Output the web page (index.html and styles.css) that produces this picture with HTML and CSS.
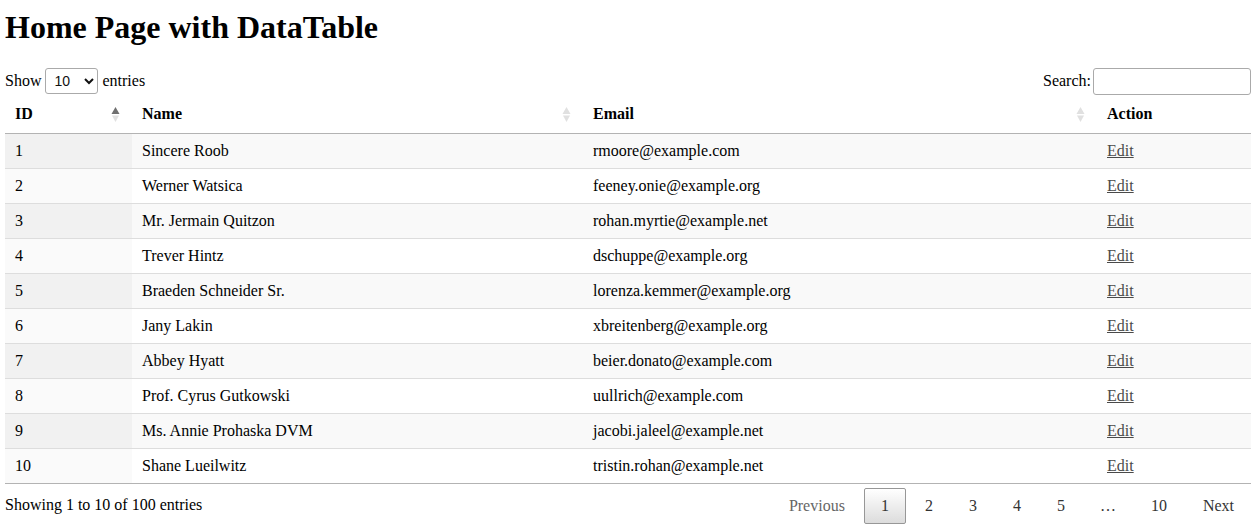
FILE: index.html
```html
<!DOCTYPE html>
<html>
<head>
<meta charset="utf-8">
<title>Home Page with DataTable</title>
<link rel="stylesheet" href="styles.css">
</head>
<body>
<h1 class="title">Home Page with DataTable</h1>
<div class="controls">
  <label class="length">Show
    <select class="length-select"><option>10</option><option>25</option><option>50</option><option>100</option></select>
    entries</label>
  <label class="filter">Search:<input class="search" type="search"></label>
</div>
<table class="dt">
  <colgroup><col class="c-id"><col class="c-name"><col class="c-email"><col class="c-action"></colgroup>
  <thead>
    <tr>
      <th><div class="th-in"><span>ID</span><svg class="sort" width="9" height="17" viewBox="0 0 9 17"><polygon class="on" points="0.5,8 8.5,8 4.5,1"/><polygon class="off" points="1,9.5 8,9.5 4.5,16"/></svg></div></th>
      <th><div class="th-in"><span>Name</span><svg class="sort" width="9" height="17" viewBox="0 0 9 17"><polygon class="off" points="0.5,8 8.5,8 4.5,1"/><polygon class="off" points="1,9.5 8,9.5 4.5,16"/></svg></div></th>
      <th><div class="th-in"><span>Email</span><svg class="sort" width="9" height="17" viewBox="0 0 9 17"><polygon class="off" points="0.5,8 8.5,8 4.5,1"/><polygon class="off" points="1,9.5 8,9.5 4.5,16"/></svg></div></th>
      <th><div class="th-in"><span>Action</span></div></th>
    </tr>
  </thead>
  <tbody>
    <tr class="odd"><td class="s1">1</td><td>Sincere Roob</td><td>rmoore@example.com</td><td><a href="#" class="edit">Edit</a></td></tr>
    <tr class="even"><td class="s1">2</td><td>Werner Watsica</td><td>feeney.onie@example.org</td><td><a href="#" class="edit">Edit</a></td></tr>
    <tr class="odd"><td class="s1">3</td><td>Mr. Jermain Quitzon</td><td>rohan.myrtie@example.net</td><td><a href="#" class="edit">Edit</a></td></tr>
    <tr class="even"><td class="s1">4</td><td>Trever Hintz</td><td>dschuppe@example.org</td><td><a href="#" class="edit">Edit</a></td></tr>
    <tr class="odd"><td class="s1">5</td><td>Braeden Schneider Sr.</td><td>lorenza.kemmer@example.org</td><td><a href="#" class="edit">Edit</a></td></tr>
    <tr class="even"><td class="s1">6</td><td>Jany Lakin</td><td>xbreitenberg@example.org</td><td><a href="#" class="edit">Edit</a></td></tr>
    <tr class="odd"><td class="s1">7</td><td>Abbey Hyatt</td><td>beier.donato@example.com</td><td><a href="#" class="edit">Edit</a></td></tr>
    <tr class="even"><td class="s1">8</td><td>Prof. Cyrus Gutkowski</td><td>uullrich@example.com</td><td><a href="#" class="edit">Edit</a></td></tr>
    <tr class="odd"><td class="s1">9</td><td>Ms. Annie Prohaska DVM</td><td>jacobi.jaleel@example.net</td><td><a href="#" class="edit">Edit</a></td></tr>
    <tr class="even"><td class="s1">10</td><td>Shane Lueilwitz</td><td>tristin.rohan@example.net</td><td><a href="#" class="edit">Edit</a></td></tr>
  </tbody>
</table>
<div class="footer">
  <div class="info">Showing 1 to 10 of 100 entries</div>
  <div class="paging">
    <a class="pbtn disabled">Previous</a>
    <a class="pbtn current">1</a>
    <a class="pbtn">2</a>
    <a class="pbtn">3</a>
    <a class="pbtn">4</a>
    <a class="pbtn">5</a>
    <span class="ellipsis">…</span>
    <a class="pbtn">10</a>
    <a class="pbtn">Next</a>
  </div>
</div>
</body>
</html>
```
FILE: styles.css
```css
html, body {
  background: #fff;
}
body {
  margin: 0 3px 0 5px;
  font-family: "Liberation Serif", "Times New Roman", serif;
  font-size: 16px;
  line-height: 18px;
  color: #000;
}
.title {
  font-size: 32px;
  line-height: 37px;
  font-weight: bold;
  margin: 9px 0 21px 0;
}
.controls {
  display: flex;
  justify-content: space-between;
  align-items: center;
  height: 28px;
}
.length, .filter {
  display: flex;
  align-items: center;
}
.length-select {
  margin: 0 4px 0 4px;
  width: 53px;
  height: 26px;
  padding: 0 0 0 4px;
  border: 1px solid #aaa;
  border-radius: 3px;
  background: #fff;
  font-family: "Liberation Sans", Arial, sans-serif;
  font-size: 14px;
  color: #111;
}
.search {
  margin-left: 2px;
  width: 158px;
  height: 27px;
  box-sizing: border-box;
  border: 1px solid #aaa;
  border-radius: 3px;
  padding: 5px;
  background: #fff;
}
.dt {
  width: 100%;
  border-collapse: separate;
  border-spacing: 0;
  table-layout: fixed;
  border-bottom: 1px solid #b3b3b3;
}
.c-id { width: 127px; }
.c-name { width: 451px; }
.c-email { width: 514px; }
.c-action { width: 154px; }
.dt th {
  text-align: left;
  font-weight: bold;
  padding: 10px 12px 10px 10px;
  border-bottom: 1px solid #b3b3b3;
}
.th-in {
  display: flex;
  justify-content: space-between;
  align-items: center;
  height: 18px;
}
.sort {
  display: block;
  margin-top: 1px;
}
.sort .on { fill: #6f6f6f; }
.sort .off { fill: #e0e0e0; }
.dt td {
  padding: 8px 10px;
  border-top: 1px solid #ddd;
  white-space: nowrap;
}
.dt tbody tr:first-child td {
  border-top: none;
}
.dt tr.odd td { background: #f9f9f9; }
.dt tr.odd td.s1 { background: #f1f1f1; }
.dt tr.even td.s1 { background: #fafafa; }
.edit {
  color: #4a4a4a;
  text-decoration: underline;
}
.footer {
  display: flex;
  justify-content: space-between;
  align-items: flex-start;
}
.info {
  padding-top: 12px;
}
.paging {
  display: flex;
  align-items: center;
  padding-top: 4px;
}
.pbtn {
  display: block;
  box-sizing: border-box;
  min-width: 24px;
  padding: 8px 16px;
  margin-left: 2px;
  border: 1px solid transparent;
  border-radius: 2px;
  color: #333;
  text-align: center;
  text-decoration: none;
  cursor: pointer;
}
.pbtn.disabled {
  color: #666;
  cursor: default;
}
.pbtn.current {
  border: 1px solid #979797;
  background: linear-gradient(to bottom, #fff 0%, #dcdcdc 100%);
  color: #333;
}
.ellipsis {
  padding: 0 16px;
  margin-left: 2px;
  color: #333;
}
```
